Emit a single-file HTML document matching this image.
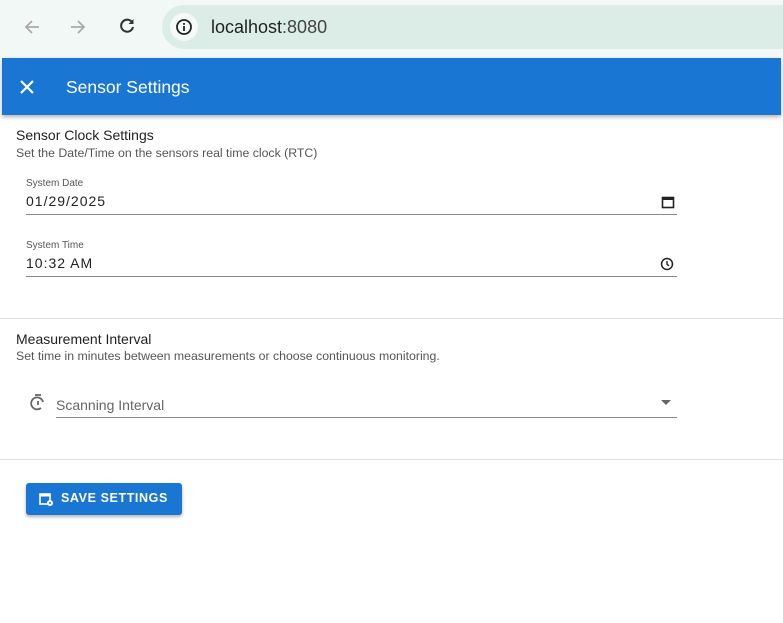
<!DOCTYPE html>
<html><head><style>
*{margin:0;padding:0;box-sizing:border-box}
body{width:783px;height:623px;background:#fff;font-family:"Liberation Sans",sans-serif;position:relative;overflow:hidden;color:#222}
.a{position:absolute}
.lbl{font-size:10px;color:#555}
.val{font-size:14px;color:#222;letter-spacing:1px}
.line{height:1px;background:#888}
.hr{height:1px;background:#e0e0e0;left:0;width:783px}
</style></head><body>
<div class="a" style="left:0;top:0;width:783px;height:58px;background:#f2f8f5"></div>
<svg class="a" style="left:22px;top:17px" width="20" height="20" viewBox="0 0 20 20"><path d="M17 10H4M10 4l-6 6 6 6" stroke="#aaa" stroke-width="1.8" fill="none"/></svg>
<svg class="a" style="left:68px;top:17px" width="20" height="20" viewBox="0 0 20 20"><path d="M3 10h13M10 4l6 6-6 6" stroke="#aaa" stroke-width="1.8" fill="none"/></svg>
<svg class="a" style="left:117px;top:16px" width="20" height="20" viewBox="0 0 20 20"><path d="M15.5 7A6 6 0 1 0 16 11" stroke="#333" stroke-width="2" fill="none"/><path d="M16.5 3v5h-5z" fill="#333"/></svg>
<div class="a" style="left:162px;top:5px;width:621px;height:44px;border-radius:22px 0 0 22px;background:#dcede7"></div>
<div class="a" style="left:170px;top:13px;width:28px;height:28px;border-radius:14px;background:#f5faf8"></div>
<svg class="a" style="left:175px;top:18px" width="18" height="18" viewBox="0 0 18 18"><circle cx="9" cy="9" r="7" stroke="#222" stroke-width="1.8" fill="none"/><rect x="8.1" y="8" width="1.8" height="5" fill="#222"/><rect x="8.1" y="5" width="1.8" height="1.8" fill="#222"/></svg>
<div class="a" style="left:211px;top:17px;font-size:18px;color:#222">localhost<span style="color:#444">:8080</span></div>
<div class="a" style="left:2px;top:58px;width:779px;height:57px;background:#1976d2;box-shadow:0 2px 4px rgba(0,0,0,.3)"></div>
<svg class="a" style="left:19px;top:79px" width="16" height="16" viewBox="0 0 16 16"><path d="M2 2l12 12M14 2L2 14" stroke="#fff" stroke-width="2.2"/></svg>
<div class="a" style="left:66px;top:77px;font-size:17.5px;color:#fff">Sensor Settings</div>
<div class="a" style="left:16px;top:127px;font-size:14px">Sensor Clock Settings</div>
<div class="a" style="left:16px;top:146px;font-size:12.3px;color:#555">Set the Date/Time on the sensors real time clock (RTC)</div>
<div class="a lbl" style="left:26px;top:178px">System Date</div>
<div class="a val" style="left:26px;top:193px">01/29/2025</div>
<svg class="a" style="left:661px;top:195px" width="14" height="14" viewBox="0 0 14 14"><rect x="1.5" y="2.5" width="11" height="10" stroke="#222" stroke-width="1.6" fill="none"/><rect x="1.5" y="2.5" width="11" height="2.5" fill="#222"/></svg>
<div class="a line" style="left:26px;top:214px;width:651px"></div>
<div class="a lbl" style="left:26px;top:240px">System Time</div>
<div class="a val" style="left:26px;top:255px">10:32 AM</div>
<svg class="a" style="left:660px;top:257px" width="14" height="14" viewBox="0 0 14 14"><circle cx="7" cy="7" r="5.5" stroke="#222" stroke-width="1.5" fill="none"/><path d="M7 4v3.3l2 1.5" stroke="#222" stroke-width="1.4" fill="none"/></svg>
<div class="a line" style="left:26px;top:276px;width:651px"></div>
<div class="a hr" style="top:318px"></div>
<div class="a" style="left:16px;top:331px;font-size:14px">Measurement Interval</div>
<div class="a" style="left:16px;top:349px;font-size:12.3px;color:#555">Set time in minutes between measurements or choose continuous monitoring.</div>
<svg class="a" style="left:28px;top:393px" width="20" height="20" viewBox="0 0 20 20"><path d="M7 2h6" stroke="#666" stroke-width="1.8"/><path d="M15 9A6 6 0 1 0 13 15" stroke="#666" stroke-width="1.8" fill="none"/><path d="M10 8v4" stroke="#666" stroke-width="1.8"/></svg>
<div class="a" style="left:56px;top:397px;font-size:14px;color:#666">Scanning Interval</div>
<svg class="a" style="left:661px;top:400px" width="10" height="6"><path d="M0 0h10L5 5z" fill="#666"/></svg>
<div class="a line" style="left:56px;top:417px;width:621px"></div>
<div class="a hr" style="top:459px"></div>
<div class="a" style="left:26px;top:483px;width:156px;height:32px;background:#1976d2;border-radius:3px;box-shadow:0 2px 3px rgba(0,0,0,.3)"></div>
<svg class="a" style="left:38px;top:491px" width="16" height="16" viewBox="0 0 16 16"><rect x="2" y="3" width="10" height="10" stroke="#fff" stroke-width="1.6" fill="none"/><rect x="2" y="3" width="10" height="2.5" fill="#fff"/><circle cx="12" cy="12" r="3" fill="#fff"/><circle cx="12" cy="12" r="1" fill="#1976d2"/></svg>
<div class="a" style="left:61px;top:491px;font-size:12.5px;font-weight:bold;color:#fff;letter-spacing:.6px">SAVE SETTINGS</div>
</body></html>
